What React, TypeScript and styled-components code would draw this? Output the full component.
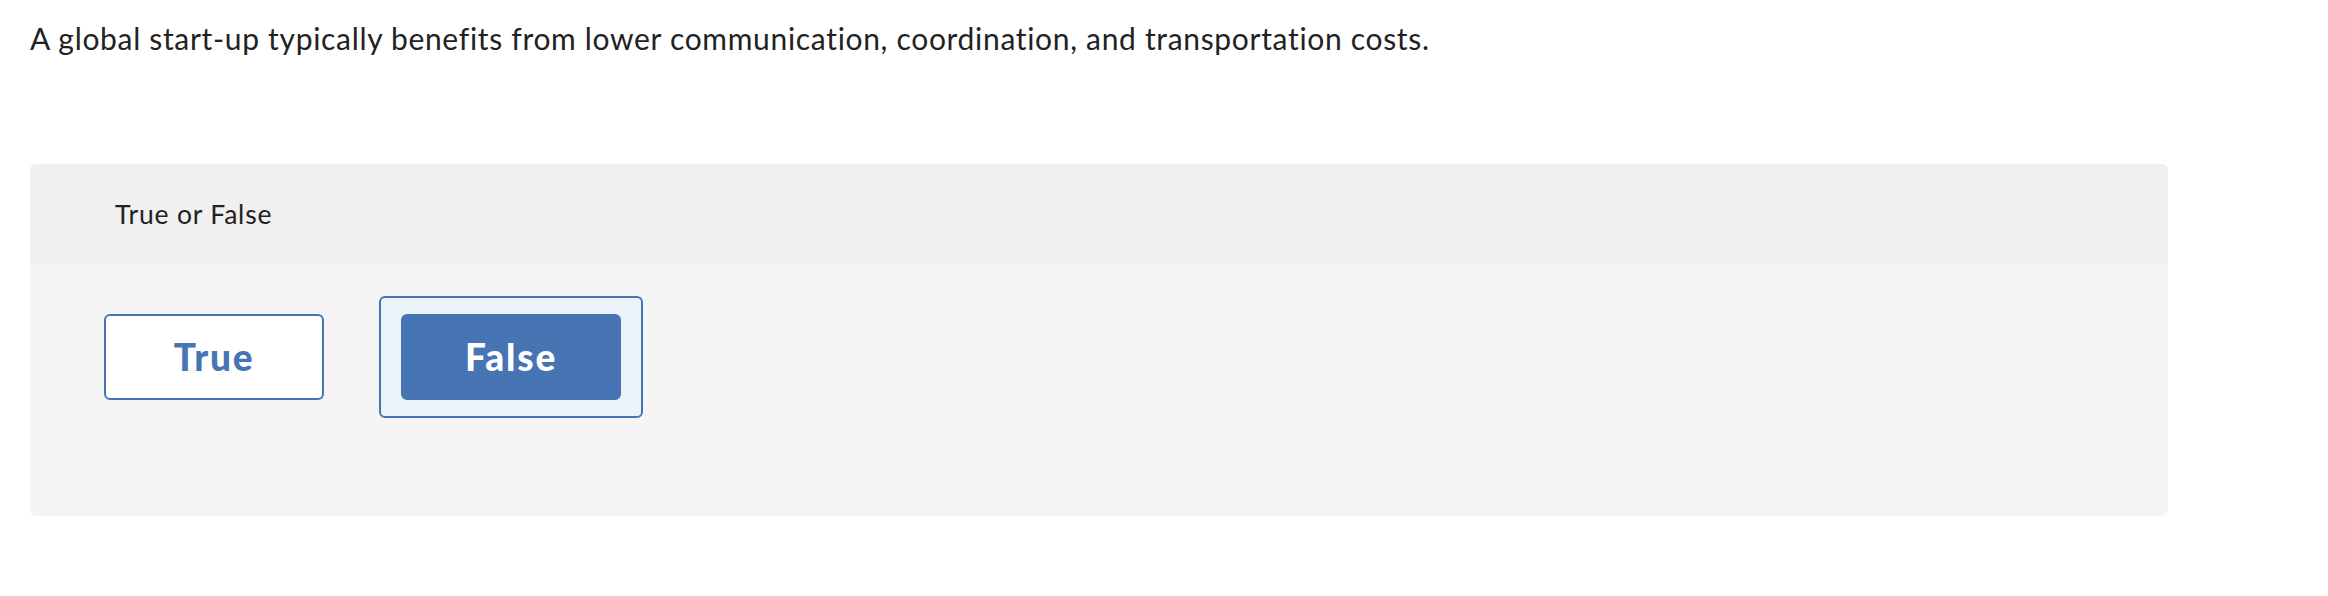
import React from "react";
import styled, { createGlobalStyle } from "styled-components";

const Global = createGlobalStyle`
  html, body {
    margin: 0;
    padding: 0;
    background: #ffffff;
  }
  body {
    font-family: Lato, "Open Sans", "Liberation Sans", sans-serif;
    font-variant-ligatures: none;
    color: #222222;
  }
`;

const Page = styled.main`
  width: 2328px;
  height: 596px;
  box-sizing: border-box;
  padding: 16px 0 0 30px;
  background: #ffffff;
`;

const Prompt = styled.p`
  margin: 0;
  font-size: 30px;
  line-height: 44px;
  font-weight: 400;
  letter-spacing: 0.68px;
  color: #222222;
`;

const Card = styled.section`
  margin-top: 104px;
  width: 2138px;
  border-radius: 6px;
  overflow: hidden;
  background: #f5f5f5;
`;

const CardHeader = styled.header`
  height: 100px;
  box-sizing: border-box;
  display: flex;
  align-items: center;
  padding: 0 0 0 85px;
  background: #f0f0f0;
  font-size: 26.5px;
  letter-spacing: 0.8px;
  color: #222222;
`;

const CardBody = styled.div`
  height: 252px;
  box-sizing: border-box;
  padding: 32px 52px;
`;

const Options = styled.div`
  display: flex;
  gap: 33px;
`;

const OptionWrap = styled.div<{ $selected?: boolean }>`
  box-sizing: border-box;
  padding: 16px 20px;
  border: 2px solid ${(p) => (p.$selected ? "#4774b2" : "transparent")};
  border-radius: 6px;
  background: ${(p) => (p.$selected ? "#ecf2fa" : "transparent")};
`;

const OptionButton = styled.button<{ $selected?: boolean }>`
  width: 220px;
  height: 86px;
  box-sizing: border-box;
  border: 2px solid #4774b2;
  border-radius: 6px;
  background: ${(p) => (p.$selected ? "#4774b2" : "#ffffff")};
  color: ${(p) => (p.$selected ? "#ffffff" : "#4774b2")};
  font-family: Lato, "Open Sans", "Liberation Sans", sans-serif;
  font-size: 37px;
  font-weight: 900;
  letter-spacing: 1.8px;
  display: flex;
  align-items: center;
  justify-content: center;
  padding: 0 0 2px 0;
  cursor: pointer;
`;

const options = [
  { label: "True", selected: false },
  { label: "False", selected: true },
];

export default function App() {
  return (
    <>
      <Global />
      <Page>
        <Prompt>
          A global start-up typically benefits from lower communication, coordination, and transportation costs.
        </Prompt>
        <Card>
          <CardHeader>True or False</CardHeader>
          <CardBody>
            <Options>
              {options.map((o) => (
                <OptionWrap key={o.label} $selected={o.selected}>
                  <OptionButton $selected={o.selected}>{o.label}</OptionButton>
                </OptionWrap>
              ))}
            </Options>
          </CardBody>
        </Card>
      </Page>
    </>
  );
}
